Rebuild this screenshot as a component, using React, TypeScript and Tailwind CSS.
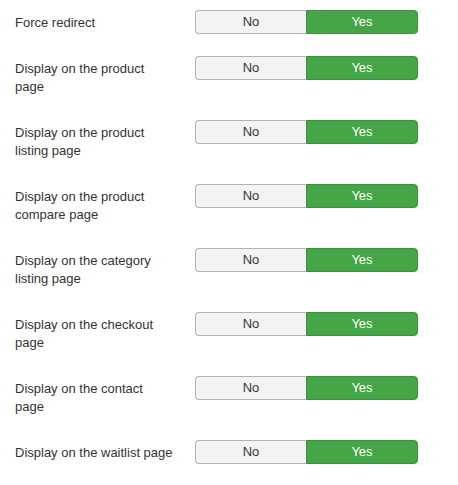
const ROWS = [
  "Force redirect",
  "Display on the product page",
  "Display on the product listing page",
  "Display on the product compare page",
  "Display on the category listing page",
  "Display on the checkout page",
  "Display on the contact page",
  "Display on the waitlist page",
];

function Toggle() {
  return (
    <div className="flex w-[223px] h-[24px] mt-[1px] text-[13px] leading-[18px]">
      <div className="flex-1 flex items-center justify-center bg-[#f3f3f3] text-[#333] border border-[#b3b3b3] border-r-0 rounded-l-[4px]">
        No
      </div>
      <div className="w-[112px] flex items-center justify-center bg-[#46a546] text-white border border-[#3d923d] rounded-r-[4px]">
        Yes
      </div>
    </div>
  );
}

export default function App() {
  return (
    <div
      className="bg-white w-[458px] min-h-[485px] pt-[9px] pl-[15px] text-[#333]"
      style={{ fontFamily: '"Liberation Sans", Arial, sans-serif' }}
    >
      {ROWS.map((label) => (
        <div key={label} className="flex items-start mb-[18px]">
          <label className="w-[180px] shrink-0 py-[5px] pr-[20px] text-[13px] leading-[18px]">{label}</label>
          <Toggle />
        </div>
      ))}
    </div>
  );
}
